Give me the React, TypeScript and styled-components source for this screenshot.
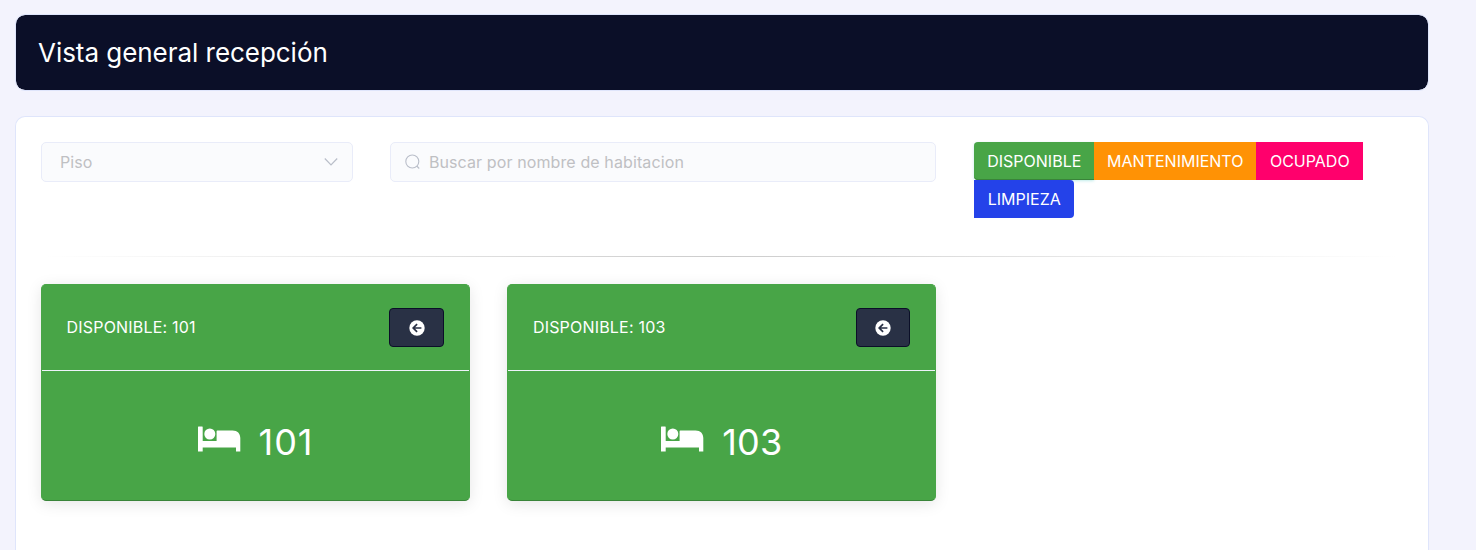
import React from 'react';
import styled, { createGlobalStyle } from 'styled-components';

const GlobalStyle = createGlobalStyle`
  * { box-sizing: border-box; }
  body {
    margin: 0;
    background: #f3f3fd;
    font-family: Inter, "Liberation Sans", sans-serif;
    font-size: 16px;
    color: #fff;
  }
`;

const Page = styled.main`
  width: 1429px;
  height: 550px;
  overflow: hidden;
  padding: 14px 0 0 15px;
  display: flex;
  flex-direction: column;
`;

const TitleBar = styled.header`
  flex: none;
  height: 77px;
  padding: 0 22px;
  display: flex;
  align-items: center;
  background: #0b0f28;
  background-clip: padding-box;
  border: 1px solid #dfe5fb;
  border-radius: 10px;
`;

const Title = styled.h1`
  margin: 0;
  font-size: 26px;
  font-weight: 400;
  line-height: 32px;
  letter-spacing: -.04px;
`;

const Panel = styled.section`
  margin-top: 25px;
  flex: 1;
  padding: 25px 25px 0;
  background: #fff;
  border: 1px solid #dfe5fb;
  border-bottom: 0;
  border-radius: 10px 10px 0 0;
`;

const Filters = styled.div`
  display: grid;
  grid-template-columns: 312px 546px 400px;
  column-gap: 37.4px;
  align-items: start;
`;

const Field = styled.div`
  height: 40px;
  display: flex;
  align-items: center;
  padding: 0 14px;
  gap: 8.5px;
  background: #fafbfd;
  border: 1px solid #e9ecf9;
  border-radius: 5px;
  color: #bfc0c3;
  letter-spacing: .11px;
  svg { flex: none; }
`;

const SelectField = styled(Field)`
  justify-content: space-between;
  padding-left: 18px;
`;

const Legend = styled.div`
  display: flex;
  flex-wrap: wrap;
`;

const Status = styled.span<{ $color: string; $radius?: string; $raised?: boolean; $width: number }>`
  width: ${p => p.$width}px;
  height: 38px;
  padding-left: 1px;
  line-height: 38px;
  text-align: center;
  background: ${p => p.$color};
  border-radius: ${p => p.$radius ?? '0'};
  box-shadow: ${p => (p.$raised ? 'inset 0 -1px 0 #398439, 0 1px 3px rgba(0, 180, 170, .25)' : 'none')};
`;

const Divider = styled.hr`
  margin: 38px 0 27px;
  height: 1px;
  border: 0;
  background: linear-gradient(to right, rgba(0,0,0,0), rgba(0,0,0,.2), rgba(0,0,0,0));
`;

const Rooms = styled.div`
  display: flex;
  gap: 37.4px;
`;

const Room = styled.article`
  width: 429px;
  height: 217px;
  background: #48a547;
  border: 1px solid #48a547;
  border-bottom-color: #398439;
  border-radius: 5px;
  box-shadow: 0 3px 15px rgba(0, 0, 0, .1);
`;

const RoomHeader = styled.div`
  height: 86px;
  padding: 0 25px 0 24.5px;
  display: flex;
  align-items: center;
  justify-content: space-between;
  border-bottom: 1px solid #eef3fa;
`;

const RoomStatus = styled.span`
  padding-bottom: 1px;
  letter-spacing: .2px;
`;

const BackButton = styled.button`
  width: 54.7px;
  height: 39px;
  padding: 0;
  display: flex;
  align-items: center;
  justify-content: center;
  color: #fff;
  background: #293145;
  border: 1px solid #0b0f28;
  border-radius: 4px;
`;

const RoomBody = styled.div`
  height: 129px;
  padding-top: 13px;
  display: flex;
  align-items: center;
  justify-content: center;
  gap: 18px;
  svg { margin-bottom: 6px; }
`;

const RoomNumber = styled.span<{ $tracking: number }>`
  font-size: 36px;
  line-height: 44px;
  font-kerning: none;
  letter-spacing: ${p => p.$tracking}px;
`;

const BackIcon = () => (
  <svg width="16" height="16" viewBox="0 0 16 16" fill="none">
    <circle cx="8" cy="8" r="7.7" fill="currentColor" />
    <path d="M8.1 4.1 4.2 8l3.9 3.9M4.4 8h8" stroke="#293145" strokeWidth="1.7" />
  </svg>
);

const Bed = () => (
  <svg width="43" height="26" viewBox="0 0 43 26" fill="currentColor">
    <path d="M0 1Q0 .5.5.5H4.2Q4.7.5 4.7 1V15H18.6V5.2Q18.6 4.5 19.3 4.5H34.5C39.5 4.5 42.3 7.5 42.3 12V25.4H38V21.4H4.7V25.4H0Z" />
    <circle cx="11.8" cy="8" r="5.5" />
  </svg>
);

const statuses = [
  { name: 'DISPONIBLE', color: '#48a547', width: 120, radius: '4px 0 0 4px', raised: true },
  { name: 'MANTENIMIENTO', color: '#ff9205', width: 162 },
  { name: 'OCUPADO', color: '#ff006c', width: 107 },
  { name: 'LIMPIEZA', color: '#2442e9', width: 100, radius: '0 4px 4px 0' },
];

const rooms = [
  { number: '101', tracking: 1 },
  { number: '103', tracking: 0.2 },
];

export default function App() {
  return (
    <>
      <GlobalStyle />
      <Page>
        <TitleBar><Title>Vista general recepción</Title></TitleBar>
        <Panel>
          <Filters>
            <SelectField>
              Piso
              <svg width="14" height="10" viewBox="0 0 14 10" fill="none" stroke="#b9bec9" strokeWidth="1.2">
                <path d="M.8 1.5 7 7.8l6.2-6.3" />
              </svg>
            </SelectField>
            <Field>
              <svg width="15" height="16" viewBox="0 0 15 16" fill="none" stroke="#b9bec9" strokeWidth="1.1">
                <circle cx="7.3" cy="7.5" r="6.5" />
                <path d="m11.8 12 2.4 2.5" />
              </svg>
              Buscar por nombre de habitacion
            </Field>
            <Legend>
              {statuses.map(s => (
                <Status key={s.name} $color={s.color} $width={s.width} $radius={s.radius} $raised={s.raised}>
                  {s.name}
                </Status>
              ))}
            </Legend>
          </Filters>
          <Divider />
          <Rooms>
            {rooms.map(r => (
              <Room key={r.number}>
                <RoomHeader>
                  <RoomStatus>DISPONIBLE: {r.number}</RoomStatus>
                  <BackButton aria-label="Volver"><BackIcon /></BackButton>
                </RoomHeader>
                <RoomBody><Bed /><RoomNumber $tracking={r.tracking}>{r.number}</RoomNumber></RoomBody>
              </Room>
            ))}
          </Rooms>
        </Panel>
      </Page>
    </>
  );
}
